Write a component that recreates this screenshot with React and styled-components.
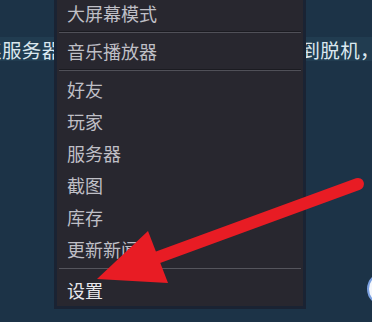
import React from 'react'
import styled, { createGlobalStyle } from 'styled-components'

const GlobalStyle = createGlobalStyle`
    html, body {
        margin: 0;
        padding: 0;
        background: #1c3347;
        overflow: hidden;
    }
`;

const Page = styled.div`
    position: relative;
    width: 372px;
    height: 322px;
    overflow: hidden;
    background: #1c3347;
    font-family: "Noto Sans CJK SC", "Noto Sans", sans-serif;
`;

const Notice = styled.p`
    margin: 0;
    padding-top: 38px;
    white-space: nowrap;
    text-indent: -18px;
    letter-spacing: 0.4px;
    font-size: 19.5px;
    line-height: 24px;
    color: #dbe8ef;
    background: linear-gradient(to bottom, transparent 37px, #213c50 37px, #213c50 61px, transparent 61px);
`;

const Menu = styled.div`
    position: absolute;
    left: 54px;
    top: -6px;
    width: 246px;
    background: #28272f;
    border: 3px solid #1a2333;
    border-top: 0;
    padding-top: 3px;
`;

const Item = styled.div`
    height: 32px;
    display: flex;
    align-items: center;
    padding-left: 10px;
    font-size: 18px;
    color: ${p => (p.$bright ? '#e8e8ec' : '#bfbfc6')};
`;

const Separator = styled.div`
    height: ${p => (p.$tall ? '9px' : '6px')};
    display: flex;
    align-items: ${p => (p.$tall ? 'flex-start' : 'center')};
    padding: 0 2px;
    box-sizing: border-box;

    &::before {
        content: '';
        flex: 1;
        margin-top: ${p => (p.$tall ? '3px' : '0')};
        height: ${p => (p.$tall ? '1px' : '2px')};
        background: ${p => (p.$tall ? '#55555d' : 'linear-gradient(#1b1b21 50%, #505058 50%)')};
    }
`;

const Badge = styled.div`
    position: absolute;
    left: 367px;
    top: 272px;
    width: 34px;
    height: 34px;
    border-radius: 50%;
    background: #f4f7fc;
    border: 2px solid #7aa0e0;
    box-sizing: border-box;
`;

const Overlay = styled.svg`
    position: absolute;
    left: 0;
    top: 0;
    pointer-events: none;
`;

const groups = [
    ['大屏幕模式'],
    ['音乐播放器'],
    ['好友', '玩家', '服务器', '截图', '库存', '更新新闻'],
]

export default function App() {
    return (
        <Page>
            <GlobalStyle />
            <Notice>连服务器时出错，请稍后再试或切换到脱机，</Notice>
            <Menu>
                {groups.map((items, i) => (
                    <React.Fragment key={i}>
                        {items.map(name => <Item key={name}>{name}</Item>)}
                        <Separator $tall={i === groups.length - 1} />
                    </React.Fragment>
                ))}
                <Item $bright>设置</Item>
            </Menu>
            <Badge />
            <Overlay width="372" height="322" viewBox="0 0 372 322">
                <line x1="358" y1="184" x2="156" y2="258" stroke="#e81c24" strokeWidth="12" strokeLinecap="round" />
                <polygon points="97,279 148,231 168,283" fill="#e81c24" />
            </Overlay>
        </Page>
    )
}
